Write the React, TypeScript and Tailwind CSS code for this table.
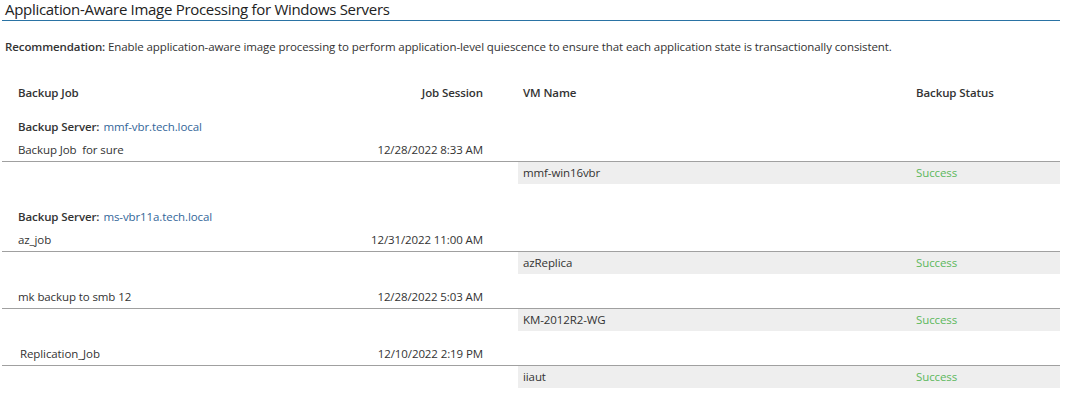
import React from "react";

type Vm = { name: string; status: string };
type Job = { name: string; session: string; indent?: boolean; vms: Vm[] };
type Server = { host: string; jobs: Job[] };

const servers: Server[] = [
    {
        host: "mmf-vbr.tech.local",
        jobs: [
            { name: "Backup Job  for sure", session: "12/28/2022 8:33 AM", vms: [{ name: "mmf-win16vbr", status: "Success" }] },
        ],
    },
    {
        host: "ms-vbr11a.tech.local",
        jobs: [
            { name: "az_job", session: "12/31/2022 11:00 AM", vms: [{ name: "azReplica", status: "Success" }] },
            { name: "mk backup to smb 12", session: "12/28/2022 5:03 AM", vms: [{ name: "KM-2012R2-WG", status: "Success" }] },
            { name: "Replication_Job", session: "12/10/2022 2:19 PM", indent: true, vms: [{ name: "iiaut", status: "Success" }] },
        ],
    },
];

function JobRows({ job, first }: { job: Job; first: boolean }) {
    return (
        <div className={first ? "" : "mt-[12px]"}>
            <div className="grid grid-cols-[516px_542px] h-[23px] items-center border-b border-[#a0a0a0]">
                <div className="flex justify-between pl-[16px] pr-[35px]">
                    <span className={job.indent ? "whitespace-pre pl-[2px]" : "whitespace-pre"}>{job.name}</span>
                    <span>{job.session}</span>
                </div>
                <div />
            </div>
            {job.vms.map((vm) => (
                <div key={vm.name} className="grid grid-cols-[516px_542px] h-[22px]">
                    <div />
                    <div className="grid grid-cols-[398px_1fr] items-center bg-[#eeeeee] h-full">
                        <span className="pl-[5px]">{vm.name}</span>
                        <span className="text-[#5cb85c]">{vm.status}</span>
                    </div>
                </div>
            ))}
        </div>
    );
}

export default function App() {
    return (
        <div className="w-[1066px] h-[396px] bg-white text-[11.5px] tracking-[-0.1px] text-[#333333] font-['Open_Sans',sans-serif]">
            <div className="ml-[2px] w-[1058px] h-[21px] border-b border-[#2a73a4] pl-[3px]">
                <h1 className="text-[15px] leading-[19px] tracking-[-0.3px] text-[#222222]">
                    Application-Aware Image Processing for Windows Servers
                </h1>
            </div>
            <p className="mt-[18px] pl-[5px] leading-[16px]">
                <span className="font-semibold">Recommendation:</span> Enable application-aware image processing to
                perform application-level quiescence to ensure that each application state is transactionally consistent.
            </p>
            <div className="ml-[2px] w-[1058px] mt-[27px]">
                <div className="grid grid-cols-[516px_542px] h-[22px] items-center font-semibold">
                    <div className="flex justify-between pl-[16px] pr-[35px]">
                        <span>Backup Job</span>
                        <span>Job Session</span>
                    </div>
                    <div className="grid grid-cols-[398px_1fr]">
                        <span className="pl-[5px]">VM Name</span>
                        <span>Backup Status</span>
                    </div>
                </div>
                {servers.map((s, i) => (
                    <div key={s.host} className={i === 0 ? "mt-[11px]" : "mt-[21px]"}>
                        <div className="h-[24px] flex items-center pl-[16px]">
                            <span className="font-semibold">Backup Server:</span>
                            <span className="ml-[4px] text-[#336699]">{s.host}</span>
                        </div>
                        {s.jobs.map((j, k) => (
                            <JobRows key={j.name} job={j} first={k === 0} />
                        ))}
                    </div>
                ))}
            </div>
        </div>
    );
}
